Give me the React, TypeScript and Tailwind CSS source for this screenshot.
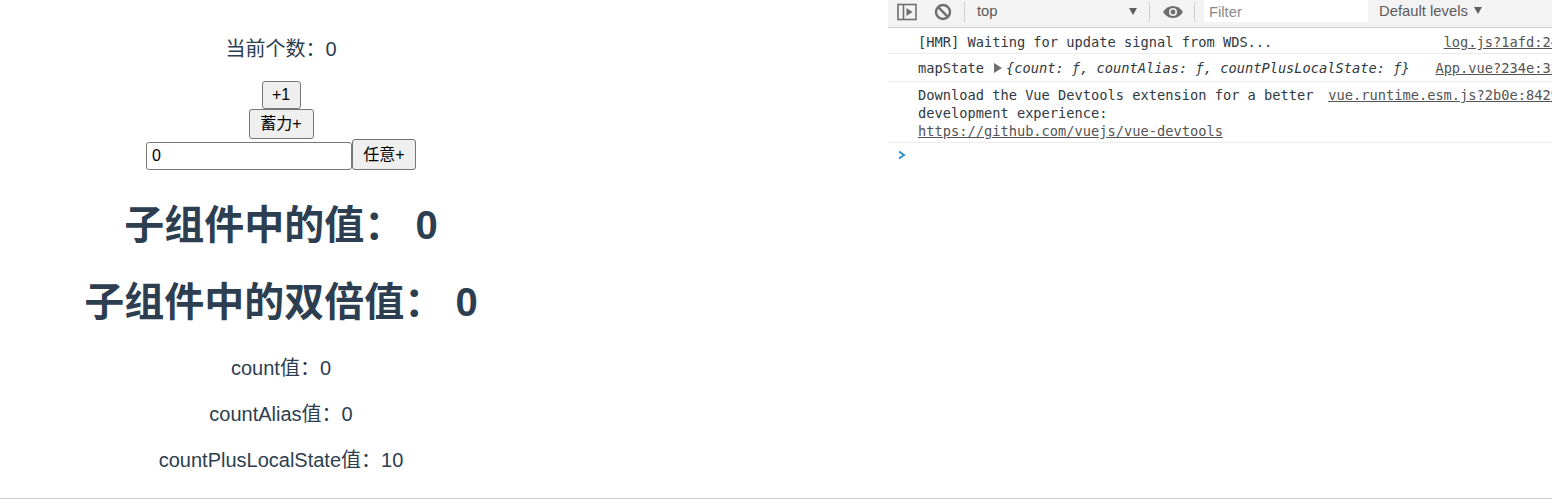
const CJK = "font-['Liberation_Sans','Noto_Sans_CJK_SC',sans-serif]";

function Divider() {
  return <div className="h-[20px] w-px bg-[#d0d0d0]" />;
}

function LogRow({
  children,
  source,
  className,
}: {
  children: React.ReactNode;
  source: string;
  className: string;
}) {
  return (
    <div className={`relative border-b border-[#ececec] pl-[30px] text-[13.700px] leading-[18px] text-[#303942] ${className}`}>
      <a className="float-right -mr-[7px] ml-[12px] whitespace-nowrap text-[#545454] underline">{source}</a>
      {children}
    </div>
  );
}

function DevTools() {
  return (
    <div className="w-[664px] shrink-0 overflow-hidden font-['DejaVu_Sans_Mono',monospace]">
      <div className="flex h-[28px] items-center border-b border-[#cfcfcf] bg-[#f3f3f3] pb-[4px] font-['Liberation_Sans',sans-serif] text-[14.800px] text-[#5a5a5a]">
        <svg width="20" height="18" viewBox="0 0 20 18" className="ml-[9px]" fill="none">
          <rect x="1" y="1.500" width="18" height="15" stroke="#6e6e6e" strokeWidth="1.600" />
          <path d="M6.500 2v14" stroke="#6e6e6e" strokeWidth="1.600" />
          <path d="M9.500 5 15.500 9l-6 4z" fill="#6e6e6e" />
        </svg>
        <svg width="18" height="18" viewBox="0 0 18 18" className="ml-[17px]" fill="none">
          <circle cx="9" cy="9" r="7" stroke="#6e6e6e" strokeWidth="2.400" />
          <path d="M4.200 4.200l9.600 9.600" stroke="#6e6e6e" strokeWidth="2.400" />
        </svg>
        <div className="ml-[12px]"><Divider /></div>
        <span className="ml-[12px] w-[152px]">top</span>
        <span className="h-0 w-0 border-x-[4px] border-t-[7px] border-x-transparent border-t-[#5f5f5f]" />
        <div className="ml-[12px]"><Divider /></div>
        <svg width="20" height="14" viewBox="0 0 20 14" className="ml-[13px]">
          <path d="M0 7c2.500-4 6-6 10-6s7.500 2 10 6c-2.500 4-6 6-10 6S2.500 11 0 7z" fill="#6e6e6e" />
          <circle cx="10" cy="7" r="4" fill="#f3f3f3" />
          <circle cx="10" cy="7" r="2.400" fill="#6e6e6e" />
        </svg>
        <div className="ml-[11px]"><Divider /></div>
        <div className="ml-[9px] h-[22px] w-[164px] self-start bg-white pl-[5px] leading-[24px] text-[#8a8a8a]">Filter</div>
        <span className="ml-[11px]">Default levels</span>
        <span className="ml-[6px] mb-[3px] h-0 w-0 border-x-[4px] border-t-[7px] border-x-transparent border-t-[#5f5f5f]" />
      </div>
      <LogRow source="log.js?1afd:24" className="h-[26px] pt-[5px]">
        [HMR] Waiting for update signal from WDS...
      </LogRow>
      <LogRow source="App.vue?234e:32" className="h-[28px] pt-[5px]">
        mapState
        <span className="ml-[10px] mr-[4px] inline-block h-0 w-0 border-y-[5px] border-l-[8px] border-y-transparent border-l-[#6e6e6e]" />
        <i>{"{count: ƒ, countAlias: ƒ, countPlusLocalState: ƒ}"}</i>
      </LogRow>
      <LogRow source="vue.runtime.esm.js?2b0e:8429" className="h-[61px] pt-[4px]">
        Download the Vue Devtools extension for a better development experience:
        <br />
        <a className="text-[#545454] underline">https://github.com/vuejs/vue-devtools</a>
      </LogRow>
      <svg width="10" height="10" viewBox="0 0 10 10" className="ml-[9px] mt-[7px]" fill="none">
        <path d="M2 1.500 7 5 2 8.500" stroke="#2d8fc4" strokeWidth="2" />
      </svg>
    </div>
  );
}

export default function App() {
  return (
    <div className="flex h-[499px] w-[1552px] overflow-hidden border-b border-[#cfcfcf] bg-white">
      <div className={`w-[562px] shrink-0 pt-[37px] text-center text-[20px] leading-[24px] text-[#2c3e50] ${CJK}`}>
        <p>当前个数：0</p>
        <div className="mt-[20px] flex flex-col items-center text-[16px] text-black">
          <button className="h-[28px] w-[39px] rounded-[3px] border border-[#767676] bg-[#efefef] leading-none">+1</button>
          <button className="h-[30px] w-[65px] rounded-[3px] border border-[#767676] bg-[#efefef] leading-none">蓄力+</button>
          <div className="flex h-[31px] items-end">
            <input
              readOnly
              value="0"
              className="h-[28px] w-[206px] rounded-[3px] border border-[#767676] bg-white px-[5px] text-[16px]"
            />
            <button className="h-[31px] w-[64px] rounded-[3px] border border-[#767676] bg-[#efefef] leading-none">任意+</button>
          </div>
        </div>
        <h1 className="mt-[30px] text-[40px] font-bold leading-[50px]">子组件中的值： 0</h1>
        <h1 className="mt-[27px] text-[40px] font-bold leading-[50px]">子组件中的双倍值： 0</h1>
        <p className="mt-[29px]">count值：0</p>
        <p className="mt-[22px]">countAlias值：0</p>
        <p className="mt-[22px]">countPlusLocalState值：10</p>
      </div>
      <div className="w-[326px] shrink-0" />
      <DevTools />
    </div>
  );
}
